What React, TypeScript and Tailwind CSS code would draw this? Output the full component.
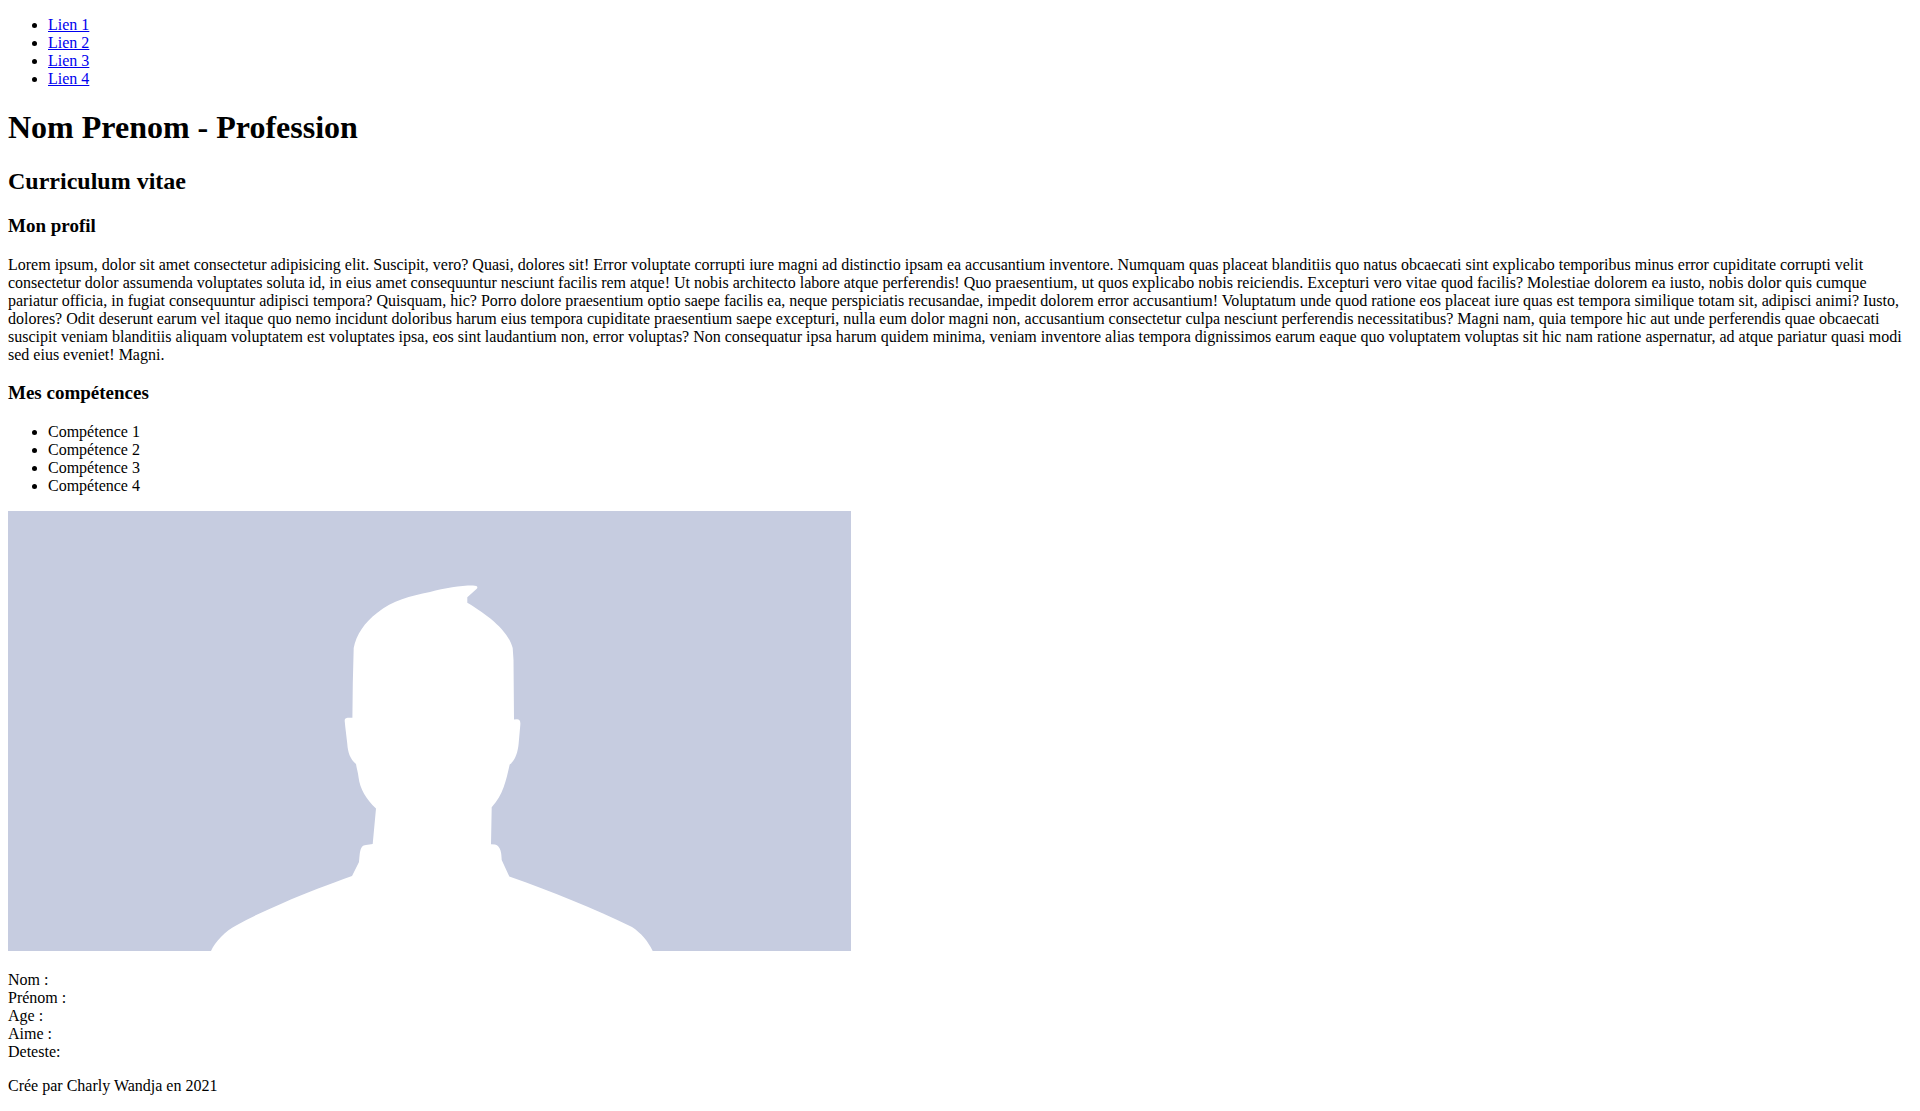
const links = ["Lien 1", "Lien 2", "Lien 3", "Lien 4"];
const skills = ["Compétence 1", "Compétence 2", "Compétence 3", "Compétence 4"];
const details = ["Nom :", "Prénom :", "Age :", "Aime :", "Deteste:"];

function Portrait() {
  return (
    <svg
      role="img"
      aria-label="Portrait"
      viewBox="8 511 843 440"
      className="mt-4 block w-[843px] max-w-full"
    >
      <rect x="8" y="511" width="843" height="440" fill="#c6cce0" />
      <path
        fill="#fff"
        d="M211 951C215 942 225 931 237 925C251 917 267 910 283 903C305 893 330 884 352 876L359 862C360 856 359 845 366 845L372.700 844L376 808.500C366 799 360 789 358.500 777C358 772 356.500 768 356 764C350 759 347.800 752 347.300 744L345.300 727L344.700 721C344.500 718 347 717.700 349 717.700L352.400 717.700L352.800 683L353.700 648C356 635 365 622 377 613C393 600 410 596 430 592C445 588 461 585.500 473 585.600C477 585.700 478.500 587 476.500 589L467.300 597.300L467.300 602.700C483 612 508 629 512.700 648L513.500 660L514 719.500L517 719.300C519.500 719.300 520.700 721 520.300 725L518.700 743C518 752 515 761 509.700 764.500C506 781 503 795 491.700 807.300L491 844.300L495 844.500C501 846 501.500 854 501.700 860L509.300 876.500C553 892 593 908 632 927C641 933 648 941 652.700 951Z"
      />
    </svg>
  );
}

export default function App() {
  return (
    <div className="p-2 font-['Liberation_Serif',serif] text-base leading-[18px] text-black">
      <nav className="mt-2">
        <ul className="list-disc pl-10">
          {links.map((link) => (
            <li key={link}>
              <a href="#" className="text-[#0000ee] underline">
                {link}
              </a>
            </li>
          ))}
        </ul>
      </nav>

      <header>
        <h1 className="mt-[21px] text-[32px] leading-[37px] font-bold">Nom Prenom - Profession</h1>
      </header>

      <main>
        <h2 className="mt-[22px] text-2xl leading-[27px] font-bold">Curriculum vitae</h2>

        <section>
          <h3 className="mt-5 text-[19px] leading-[22px] font-bold">Mon profil</h3>
          <p className="mt-[19px]">
            Lorem ipsum, dolor sit amet consectetur adipisicing elit. Suscipit, vero? Quasi, dolores sit! Error
            voluptate corrupti iure magni ad distinctio ipsam ea accusantium inventore. Numquam quas placeat
            blanditiis quo natus obcaecati sint explicabo temporibus minus error cupiditate corrupti velit
            consectetur dolor assumenda voluptates soluta id, in eius amet consequuntur nesciunt facilis rem atque!
            Ut nobis architecto labore atque perferendis! Quo praesentium, ut quos explicabo nobis reiciendis.
            Excepturi vero vitae quod facilis? Molestiae dolorem ea iusto, nobis dolor quis cumque pariatur officia,
            in fugiat consequuntur adipisci tempora? Quisquam, hic? Porro dolore praesentium optio saepe facilis ea,
            neque perspiciatis recusandae, impedit dolorem error accusantium! Voluptatum unde quod ratione eos
            placeat iure quas est tempora similique totam sit, adipisci animi? Iusto, dolores? Odit deserunt earum
            vel itaque quo nemo incidunt doloribus harum eius tempora cupiditate praesentium saepe excepturi, nulla
            eum dolor magni non, accusantium consectetur culpa nesciunt perferendis necessitatibus? Magni nam, quia
            tempore hic aut unde perferendis quae obcaecati suscipit veniam blanditiis aliquam voluptatem est
            voluptates ipsa, eos sint laudantium non, error voluptas? Non consequatur ipsa harum quidem minima,
            veniam inventore alias tempora dignissimos earum eaque quo voluptatem voluptas sit hic nam ratione
            aspernatur, ad atque pariatur quasi modi sed eius eveniet! Magni.
          </p>
        </section>

        <section>
          <h3 className="mt-[18px] text-[19px] leading-[22px] font-bold">Mes compétences</h3>
          <ul className="mt-[19px] list-disc pl-10">
            {skills.map((skill) => (
              <li key={skill}>{skill}</li>
            ))}
          </ul>
        </section>

        <aside>
          <Portrait />
          <ul className="mt-5">
            {details.map((detail) => (
              <li key={detail}>{detail}</li>
            ))}
          </ul>
        </aside>
      </main>

      <footer className="mt-4">
        <p>Crée par Charly Wandja en 2021</p>
      </footer>
    </div>
  );
}
